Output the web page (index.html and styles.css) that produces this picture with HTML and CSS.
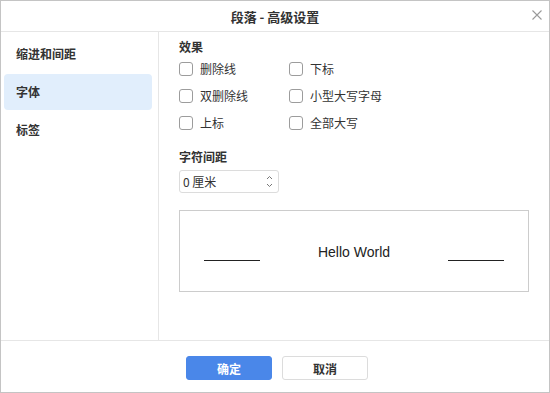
FILE: index.html
```html
<!DOCTYPE html>
<html lang="zh-CN">
<head>
    <meta charset="UTF-8">
    <meta name="viewport" content="width=device-width, initial-scale=1.0">
    <title>段落 - 高级设置</title>
    <link rel="stylesheet" href="styles.css">
</head>
<body>
    <div class="dialog">
        <div class="titlebar">
            <span class="title">段落 - 高级设置</span>
            <svg class="close" width="10" height="10" viewBox="0 0 10 10">
                <path d="M0.5 0.5 L9.5 9.5 M9.5 0.5 L0.5 9.5" stroke="#9a9a9a" stroke-width="1.1" fill="none"/>
            </svg>
        </div>

        <div class="dialog-body">
            <ul class="sidebar">
                <li class="nav-item">缩进和间距</li>
                <li class="nav-item active">字体</li>
                <li class="nav-item">标签</li>
            </ul>

            <div class="content">
                <div class="section-title">效果</div>
                <div class="effects">
                    <label class="check"><span class="box"></span>删除线</label>
                    <label class="check"><span class="box"></span>下标</label>
                    <label class="check"><span class="box"></span>双删除线</label>
                    <label class="check"><span class="box"></span>小型大写字母</label>
                    <label class="check"><span class="box"></span>上标</label>
                    <label class="check"><span class="box"></span>全部大写</label>
                </div>

                <div class="section-title spacing-title">字符间距</div>
                <div class="spin-input">
                    <span class="spin-value">0 厘米</span>
                    <span class="spin-arrows">
                        <svg width="7" height="5" viewBox="0 0 7 5"><path d="M1 4 L3.5 1.5 L6 4" stroke="#777" stroke-width="1" fill="none"/></svg>
                        <svg width="7" height="5" viewBox="0 0 7 5"><path d="M1 1 L3.5 3.5 L6 1" stroke="#777" stroke-width="1" fill="none"/></svg>
                    </span>
                </div>

                <div class="preview">
                    <span class="rule"></span>
                    <span class="sample">Hello World</span>
                    <span class="rule"></span>
                </div>
            </div>
        </div>

        <div class="footer">
            <button class="btn btn-primary">确定</button>
            <button class="btn">取消</button>
        </div>
    </div>
</body>
</html>
```

FILE: styles.css
```css
* {
    box-sizing: border-box;
}
body {
    margin: 0;
    font-family: "Noto Sans CJK SC", "Liberation Sans", sans-serif;
    color: #333;
    background-color: white;
}
.dialog {
    width: 550px;
    height: 393px;
    border: 1px solid #c4c4c4;
    display: flex;
    flex-direction: column;
}
.titlebar {
    height: 31px;
    border-bottom: 1px solid #e6e6e6;
    position: relative;
    display: flex;
    align-items: center;
    justify-content: center;
}
.title {
    font-size: 13px;
    font-weight: bold;
    color: #333;
}
.close {
    position: absolute;
    right: 7px;
    top: 9px;
}
.dialog-body {
    flex: 1;
    display: flex;
}
.sidebar {
    list-style: none;
    margin: 0;
    width: 158px;
    padding: 4px 6px 0 3px;
    border-right: 1px solid #e6e6e6;
}
.nav-item {
    height: 36px;
    line-height: 36px;
    margin-bottom: 2px;
    padding-left: 12px;
    font-size: 12px;
    font-weight: bold;
    color: #333;
    border-radius: 4px;
}
.nav-item.active {
    background-color: #e1eefc;
}
.content {
    flex: 1;
    padding: 7px 0 0 20px;
}
.section-title {
    font-size: 12px;
    font-weight: bold;
    line-height: 16px;
    color: #333;
}
.effects {
    display: grid;
    grid-template-columns: 110px 110px;
    grid-auto-rows: 27px;
}
.check {
    display: flex;
    align-items: center;
    font-size: 12px;
    color: #333;
}
.box {
    width: 14px;
    height: 14px;
    border: 1px solid #9c9c9c;
    border-radius: 3px;
    margin-right: 7px;
}
.spacing-title {
    margin-top: 13px;
}
.spin-input {
    margin-top: 5px;
    width: 100px;
    height: 23px;
    border: 1px solid #dcdcdc;
    border-radius: 3px;
    display: flex;
    align-items: center;
    justify-content: space-between;
    padding: 0 5px 0 3px;
    font-size: 12px;
    color: #333;
}
.spin-arrows {
    display: flex;
    flex-direction: column;
    gap: 3px;
}
.spin-arrows svg {
    display: block;
}
.preview {
    margin-top: 17px;
    width: 350px;
    height: 82px;
    border: 1px solid #cccccc;
    display: flex;
    align-items: center;
    justify-content: space-between;
    padding: 2px 24px 0;
}
.rule {
    width: 56px;
    height: 1px;
    background-color: #222;
    margin-top: 16px;
}
.sample {
    font-family: "Liberation Sans", Arial, sans-serif;
    font-size: 14px;
    color: #222;
}
.footer {
    height: 52px;
    border-top: 1px solid #e6e6e6;
    display: flex;
    justify-content: center;
    gap: 10px;
    padding: 15px 0 0 4px;
}
.btn {
    width: 86px;
    height: 24px;
    border: 1px solid #dcdcdc;
    border-radius: 3px;
    background-color: white;
    font-family: "Noto Sans CJK SC", sans-serif;
    font-size: 12px;
    font-weight: bold;
    color: #333;
    padding: 0;
}
.btn-primary {
    background-color: #4a87e9;
    border-color: #4a87e9;
    color: white;
}
```
